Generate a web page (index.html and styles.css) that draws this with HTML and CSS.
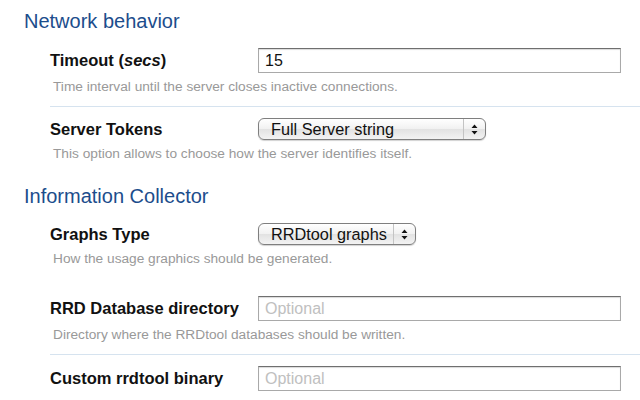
FILE: index.html
```html
<!DOCTYPE html>
<html>
<head>
<meta charset="utf-8">
<link rel="stylesheet" href="styles.css">
</head>
<body>
<div class="page">
  <h2 class="section-title">Network behavior</h2>
  <div class="row">
    <div class="field">
      <label class="label">Timeout (<em>secs</em>)</label>
      <input class="text-input" type="text" value="15">
    </div>
    <div class="help">Time interval until the server closes inactive connections.</div>
  </div>
  <div class="row last">
    <div class="field">
      <label class="label">Server Tokens</label>
      <div class="select select-wide">
        <span class="select-text">Full Server string</span>
        <span class="select-arrows">
          <svg width="7" height="11" viewBox="0 0 7 11"><path d="M3.5 0.5 L6.5 4 L0.5 4 Z M0.5 7 L6.5 7 L3.5 10.5 Z" fill="#111"/></svg>
        </span>
      </div>
    </div>
    <div class="help">This option allows to choose how the server identifies itself.</div>
  </div>

  <h2 class="section-title second">Information Collector</h2>
  <div class="row hidden-sep">
    <div class="field">
      <label class="label">Graphs Type</label>
      <div class="select select-narrow">
        <span class="select-text">RRDtool graphs</span>
        <span class="select-arrows">
          <svg width="7" height="11" viewBox="0 0 7 11"><path d="M3.5 0.5 L6.5 4 L0.5 4 Z M0.5 7 L6.5 7 L3.5 10.5 Z" fill="#111"/></svg>
        </span>
      </div>
    </div>
    <div class="help">How the usage graphics should be generated.</div>
  </div>
  <div class="row spaced">
    <div class="field">
      <label class="label">RRD Database directory</label>
      <input class="text-input" type="text" placeholder="Optional">
    </div>
    <div class="help">Directory where the RRDtool databases should be written.</div>
  </div>
  <div class="row last">
    <div class="field">
      <label class="label">Custom rrdtool binary</label>
      <input class="text-input" type="text" placeholder="Optional">
    </div>
    <div class="help">Full path to the rrdtool binary. By default it will look for it in the PATH.</div>
  </div>
</div>
</body>
</html>
```

FILE: styles.css
```css
html, body {
  margin: 0;
  padding: 0;
  background: #ffffff;
  overflow: hidden;
}

body {
  font-family: "Liberation Sans", Arial, Helvetica, sans-serif;
  color: #111;
}

.page {
  padding-top: 9px;
}

.section-title {
  margin: 0 0 4px 24px;
  font-size: 20px;
  line-height: 24px;
  font-weight: normal;
  color: #1c4d8c;
}

.section-title.second {
  margin-top: 11px;
}

.row {
  margin-left: 50px;
  padding: 11px 0 11px 0;
  border-bottom: 1px solid #d6e3ef;
}

.row.last {
  border-bottom: none;
}

.row.hidden-sep {
  border-bottom-color: transparent;
}

.row.spaced {
  margin-top: 6px;
}

.field {
  display: flex;
  align-items: center;
}

.label {
  width: 208px;
  flex: none;
  font-size: 16.5px;
  font-weight: bold;
  color: #111;
}

.label em {
  font-style: italic;
}

.text-input {
  box-sizing: border-box;
  width: 363px;
  height: 25px;
  margin: 0;
  padding: 0 6px;
  border: 1px solid #a9a9a9;
  border-top-color: #6f6f6f;
  box-shadow: inset 0 1px 1px rgba(0, 0, 0, 0.15);
  background: #fff;
  font-family: "Liberation Sans", Arial, Helvetica, sans-serif;
  font-size: 16px;
  color: #111;
  outline: none;
}

.text-input::placeholder {
  color: #c0c0c0;
}

.select {
  box-sizing: border-box;
  display: flex;
  align-items: stretch;
  height: 22px;
  border: 1px solid #7f7f7f;
  border-radius: 6px;
  background: linear-gradient(#ffffff, #f1f1f1 50%, #e2e2e2 51%, #f3f3f3);
  box-shadow: 0 1px 1px rgba(0, 0, 0, 0.18);
  font-size: 16.3px;
}

.select-wide {
  width: 228px;
}

.select-narrow {
  width: 158px;
}

.select-text {
  flex: 1;
  padding-left: 12px;
  line-height: 20px;
  color: #111;
  white-space: nowrap;
}

.select-arrows {
  width: 21px;
  flex: none;
  display: flex;
  align-items: center;
  justify-content: center;
  border-left: 1px solid #c4c4c4;
}

.help {
  margin-top: 6px;
  padding-left: 3px;
  font-size: 13.7px;
  line-height: 16px;
  color: #999;
}
```
